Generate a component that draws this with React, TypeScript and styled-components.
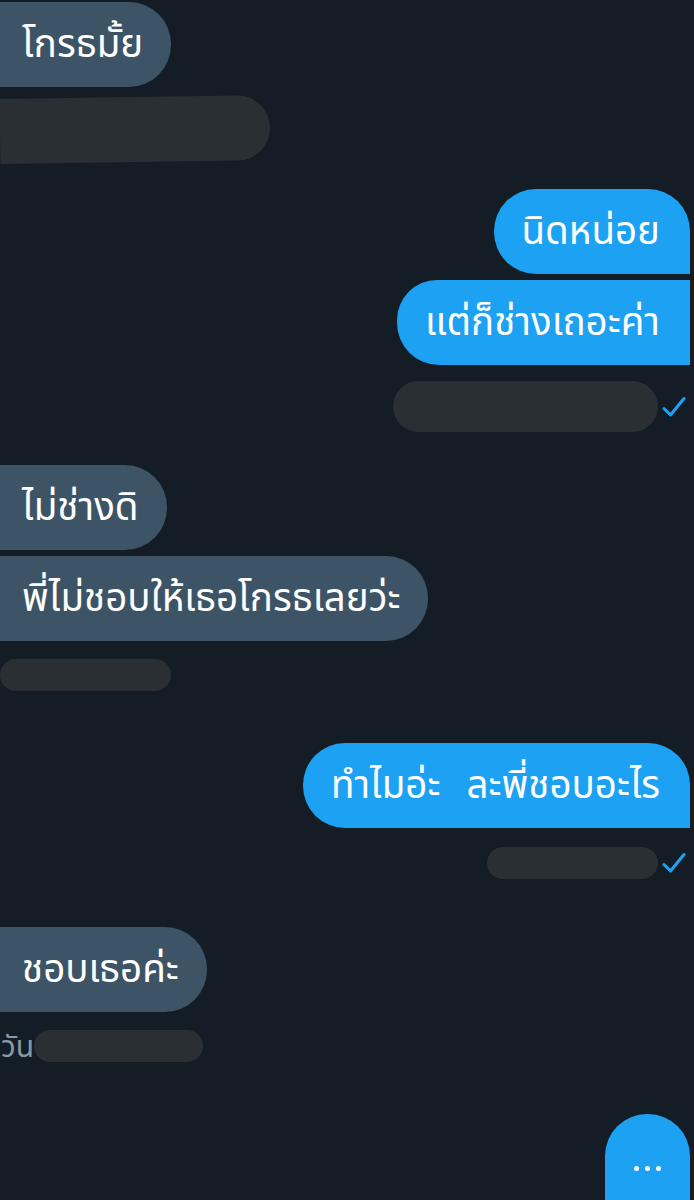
import React from "react";
import styled, { createGlobalStyle } from "styled-components";

const Global = createGlobalStyle`
  html, body { margin: 0; padding: 0; background: #141d26; }
  body { font-family: "Noto Sans", "Noto Sans Thai", sans-serif; }
`;

const Page = styled.div`
  width: 694px;
  height: 1200px;
  overflow: hidden;
  background: #141d26;
  display: flex;
  flex-direction: column;
  padding: 2px 4px 0 0;
  box-sizing: border-box;
`;

const Row = styled.div<{ $side: "in" | "out"; $gap: number }>`
  display: flex;
  justify-content: ${(p) => (p.$side === "out" ? "flex-end" : "flex-start")};
  align-items: center;
  margin-top: ${(p) => p.$gap}px;
  flex-shrink: 0;
`;

type Shape = "single" | "first" | "last";

const radius = (side: "in" | "out", shape: Shape) => {
  if (side === "in") return "0 42px 42px 0";
  if (shape === "first" || shape === "single") return "42px 42px 0 42px";
  return "40px 0 0 42px";
};

const Bubble = styled.div<{ $side: "in" | "out"; $shape: Shape }>`
  height: 85px;
  box-sizing: border-box;
  display: flex;
  align-items: center;
  padding: ${(p) => (p.$side === "out" ? "0 30px 0 28px" : "0 28px 0 22px")};
  background: ${(p) => (p.$side === "out" ? "#1da1f2" : "#3d5466")};
  color: #ffffff;
  font-size: 38.5px;
  word-spacing: 16px;
  border-radius: ${(p) => radius(p.$side, p.$shape)};
  white-space: nowrap;
`;

const Redacted = styled.div<{ $w: number; $h: number; $tilt?: number }>`
  width: ${(p) => p.$w}px;
  height: ${(p) => p.$h}px;
  border-radius: ${(p) => p.$h / 2}px;
  background: #2a2f33;
  transform: rotate(${(p) => p.$tilt ?? 0}deg);
`;

const LeadRedacted = styled(Redacted)`
  border-radius: 0 ${(p) => p.$h / 2}px ${(p) => p.$h / 2}px 0;
`;

const MetaText = styled.span`
  color: #8899a6;
  font-size: 30px;
  line-height: 32px;
  padding-left: 1px;
`;

const CheckWrap = styled.span`
  display: flex;
  margin-left: 4px;
  margin-right: 4px;
`;

const Typing = styled.div`
  width: 85px;
  height: 100px;
  border-radius: 42px 42px 0 0;
  background: #1da1f2;
  display: flex;
  justify-content: center;
  align-items: flex-start;
  padding-top: 52px;
  box-sizing: border-box;
  gap: 6px;
`;

const Dot = styled.span`
  width: 5px;
  height: 5px;
  border-radius: 50%;
  background: #ffffff;
`;

const Check = () => (
  <CheckWrap>
    <svg width="24" height="22" viewBox="0 0 24 22" fill="none">
      <path d="M2 12.5 L8.5 19 L22 2.5" stroke="#1da1f2" strokeWidth="3" strokeLinecap="round" strokeLinejoin="round" />
    </svg>
  </CheckWrap>
);

export default function App() {
  return (
    <>
      <Global />
      <Page>
        <Row $side="in" $gap={0}>
          <Bubble $side="in" $shape="single">โกรธมั้ย</Bubble>
        </Row>
        <Row $side="in" $gap={10}>
          <LeadRedacted $w={270} $h={65} $tilt={-0.8} />
        </Row>

        <Row $side="out" $gap={27}>
          <Bubble $side="out" $shape="first">นิดหน่อย</Bubble>
        </Row>
        <Row $side="out" $gap={6}>
          <Bubble $side="out" $shape="last">แต่ก็ช่างเถอะค่า</Bubble>
        </Row>
        <Row $side="out" $gap={16}>
          <Redacted $w={265} $h={51} />
          <Check />
        </Row>

        <Row $side="in" $gap={33}>
          <Bubble $side="in" $shape="first">ไม่ช่างดิ</Bubble>
        </Row>
        <Row $side="in" $gap={6}>
          <Bubble $side="in" $shape="last">พี่ไม่ชอบให้เธอโกรธเลยว่ะ</Bubble>
        </Row>
        <Row $side="in" $gap={18}>
          <Redacted $w={171} $h={32} />
        </Row>

        <Row $side="out" $gap={52}>
          <Bubble $side="out" $shape="single">ทำไมอ่ะ ละพี่ชอบอะไร</Bubble>
        </Row>
        <Row $side="out" $gap={19}>
          <Redacted $w={171} $h={32} />
          <Check />
        </Row>

        <Row $side="in" $gap={48}>
          <Bubble $side="in" $shape="single">ชอบเธอค่ะ</Bubble>
        </Row>
        <Row $side="in" $gap={18}>
          <MetaText>วัน</MetaText>
          <Redacted $w={169} $h={32} />
        </Row>

        <Row $side="out" $gap={52}>
          <Typing>
            <Dot />
            <Dot />
            <Dot />
          </Typing>
        </Row>
      </Page>
    </>
  );
}
